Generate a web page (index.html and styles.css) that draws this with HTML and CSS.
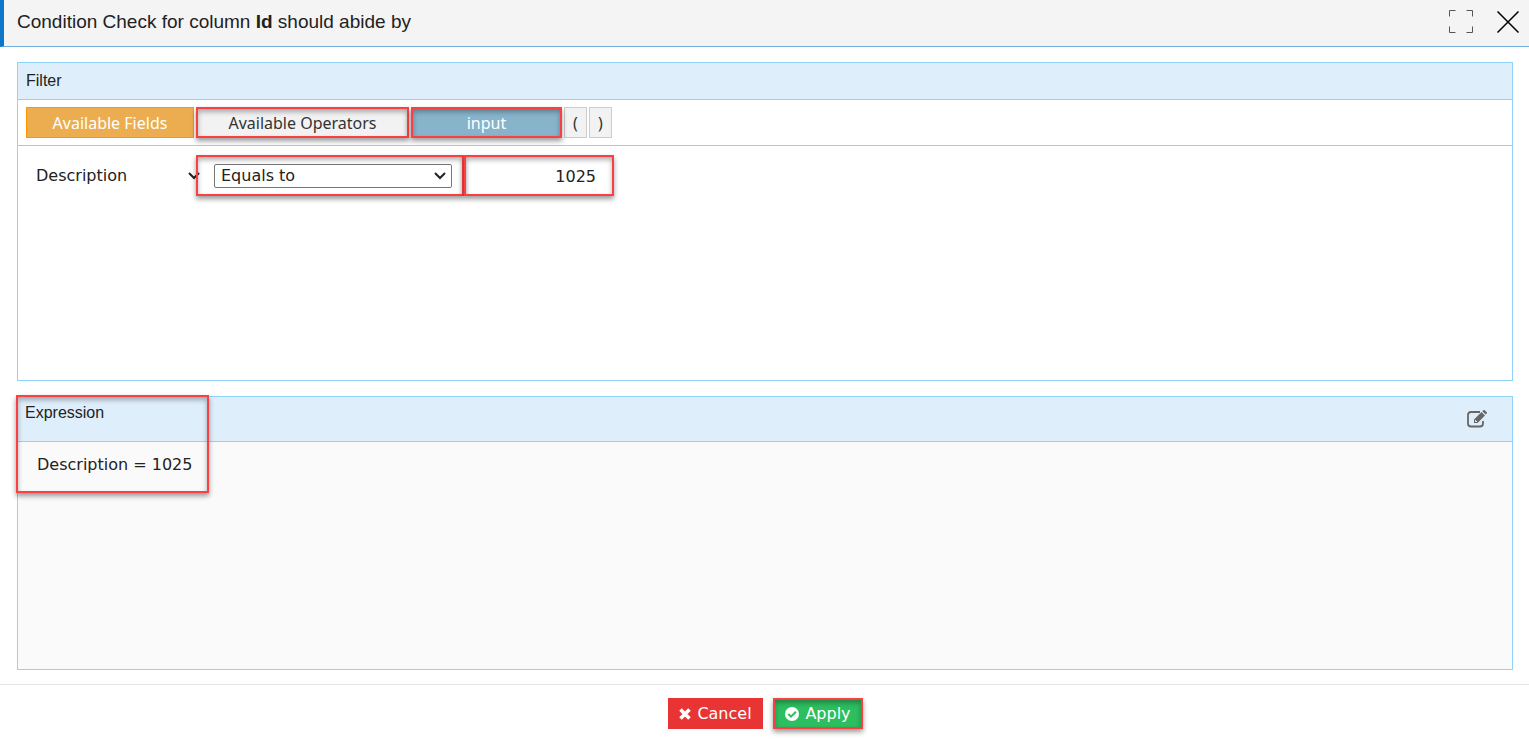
FILE: index.html
```
<!DOCTYPE html>
<html lang="en">
	<head>
		<meta charset="UTF-8">
		<title>Condition Check</title>
		<link rel="stylesheet" href="styles.css">
	</head>
	<body>
		<header class="titlebar">
			<h1>Condition Check for column <b>Id</b> should abide by</h1>
			<div class="tools">
				<button type="button" aria-label="Full screen">
					<svg width="24" height="24" viewBox="0 0 24 24"><path d="M.5 6.5v-6h6M17.5.5h6v6M.5 16.5v6h6M17.5 22.5h6v-6" fill="none" stroke="#555"/></svg>
				</button>
				<button type="button" aria-label="Close">
					<svg width="22" height="22" viewBox="0 0 22 22"><path d="M.5.5l21 21M21.5.5l-21 21" fill="none" stroke="#000" stroke-width="1.5"/></svg>
				</button>
			</div>
		</header>
		<main>
			<section class="panel">
				<h2 class="head">Filter</h2>
				<div class="bar">
					<button type="button" class="tab fields">Available Fields</button>
					<span class="mark"><button type="button" class="tab operators">Available Operators</button></span>
					<span class="mark"><button type="button" class="tab value">input</button></span>
					<button type="button" class="tab paren">(</button>
					<button type="button" class="tab paren">)</button>
				</div>
				<div class="rule">
					<select class="field" aria-label="Field"><option>Description</option></select>
					<span class="mark cell"><select class="operator" aria-label="Operator"><option>Equals to</option></select></span>
					<span class="mark cell"><input class="operand" type="text" value="1025" aria-label="Value"></span>
				</div>
			</section>
			<section class="panel expression">
				<div class="head">
					<h2>Expression</h2>
					<button type="button" aria-label="Edit expression">
						<svg width="20" height="18" viewBox="0 0 20 18"><path d="M13 2H4Q1 2 1 5v8.500Q1 16.500 4 16.500h9Q16 16.500 16 13.500V11" fill="none" stroke="#666" stroke-width="1.800"/><path d="M7 9.500L14.500 2l3.500 3.500L10.500 13H7zM15.300 1.200l1-1q.7-.5 1.400 0l2 2q.6.7 0 1.400l-1 1z" fill="#666"/><path d="M8.500 10v1.500H10" fill="none" stroke="#dfeefb"/></svg>
					</button>
				</div>
				<p class="result">Description = 1025</p>
				<span class="frame"></span>
			</section>
		</main>
		<footer>
			<button type="button" class="btn cancel">
				<svg width="12" height="12" viewBox="0 0 12 12"><path d="M1.500 1.500l9 9M10.500 1.500l-9 9" stroke="#fff" stroke-width="3.600"/></svg>
				Cancel
			</button>
			<span class="mark"><button type="button" class="btn apply">
				<svg width="14" height="14" viewBox="0 0 14 14"><circle cx="7" cy="7" r="7" fill="#fff"/><path d="M3.300 7l2.700 2.700 4.900-4.900" fill="none" stroke="#2dbe60" stroke-width="2"/></svg>
				Apply
			</button></span>
		</footer>
	</body>
</html>
```
FILE: styles.css
```
*{box-sizing: border-box;margin: 0;padding: 0;}
body{display: flex;flex-direction: column;min-height: 100vh;background: #fff;color: #222;font: 16px/20px "Liberation Sans", Arial, sans-serif;}
button{border: 0;background: none;cursor: pointer;}
svg{display: block;}
h1,h2{font-weight: normal;}

.titlebar{display: flex;justify-content: space-between;align-items: center;height: 47px;padding: 0 10px 2px 13px;border-left: 4px solid #0f77c9;border-bottom: 1px solid #6fb0de;background: #f4f4f4;}
.titlebar h1{font-size: 19px;}
.tools{display: flex;align-items: center;gap: 24px;}

main{flex: 1;display: flex;flex-direction: column;gap: 15px;padding: 15px 16px 14px 17px;}
.panel{position: relative;border: 1px solid #8fd3f8;}
.panel h2{font-size: 16px;}
.head{padding: 8px;border-bottom: 1px solid #8fd3f8;background: #dfeefb;}
.bar{display: flex;gap: 2px;padding: 7px 8px;border-bottom: 1px solid #8fd3f8;}
.tab{height: 31px;border: 1px solid #ccc;background: #f2f2f2;color: #333;font: 16px/20px "Noto Sans", "Open Sans", sans-serif;}
.fields{width: 168px;border-color: #ff9800;background: #ebad4f;color: #fff;}
.operators{width: 213px;}
.value{width: 151px;border-color: #1976d2;background: #87b3cb;color: #fff;}
.paren{width: 23px;}

.rule{display: flex;align-items: flex-start;min-height: 234px;padding: 9px 14px;}
.rule select,.rule input,.result,.btn{font: 16px/20px "DejaVu Sans", Verdana, sans-serif;}
.rule select,.rule input,.result{color: #222;}
.rule select,.rule input{height: 24px;margin-top: 9px;background: #fff;}
.rule select{appearance: none;border: 1px solid #767676;border-radius: 2px;background: #fff url("data:image/svg+xml,%3Csvg xmlns='http://www.w3.org/2000/svg' width='12' height='8'%3E%3Cpath d='M1 1l5 5 5-5' fill='none' stroke='%23222' stroke-width='2'/%3E%3C/svg%3E") no-repeat right 5px center;}
.rule .field{width: 174px;margin-right: -10px;padding-left: 3px;border-color: transparent;}
.cell{height: 41px;}
.rule .operator{width: 238px;margin-right: 12px;margin-left: 18px;padding-left: 6px;}
.rule .operand{width: 116px;margin-right: 18px;margin-left: 16px;border: 0;text-align: right;}

.expression{flex: 1;background: #fafafa;}
.expression .head{display: flex;justify-content: space-between;align-items: center;height: 45px;padding: 0 25px 0 7px;}
.expression h2{align-self: flex-start;padding-top: 6px;}
.result{padding: 13px 19px;}

/* red callouts over the steps */
.mark{position: relative;display: flex;align-items: flex-start;}
.mark::after,.frame{content: "";position: absolute;inset: 0;border: 2px solid #f94144;box-shadow: 0 3px 5px rgba(0,0,0,.4), inset 0 3px 5px rgba(0,0,0,.3);pointer-events: none;}
.frame{inset: -2px auto auto -2px;width: 193px;height: 98px;}

footer{display: flex;justify-content: center;gap: 10px;padding: 13px 0 10px 2px;border-top: 1px solid #e5e5e5;}
.btn{display: flex;align-items: center;justify-content: center;gap: 6px;height: 31px;color: #fff;}
.cancel{width: 95px;background: #e83434;}
.apply{width: 90px;background: #2dbe60;}
```
